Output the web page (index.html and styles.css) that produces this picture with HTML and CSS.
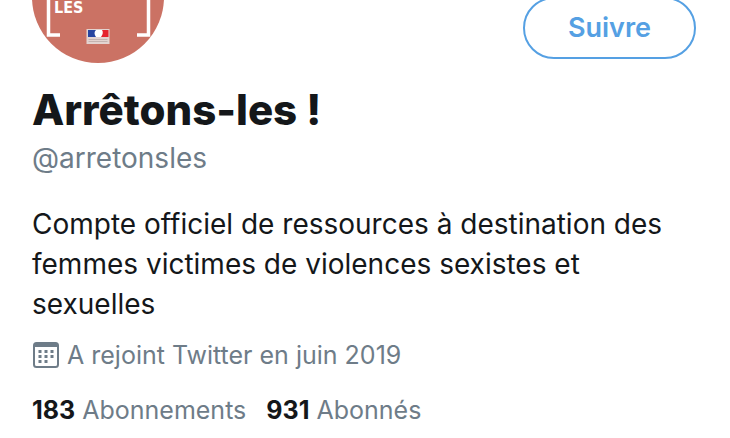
FILE: index.html
```html
<!DOCTYPE html>
<html lang="fr">
<head>
<meta charset="utf-8">
<meta name="viewport" content="width=device-width, initial-scale=1">
<title>Arrêtons-les !</title>
<link rel="stylesheet" href="styles.css">
</head>
<body>
<main class="profile">
  <header class="profile-top">
    <svg class="avatar" viewBox="0 0 132 132" aria-hidden="true">
      <circle cx="66" cy="66" r="66" fill="#cb7264"/>
      <path d="M28 40H16.500V104H28M105 40H116.500V104H105" fill="none" stroke="#fff" stroke-width="3.500"/>
      <text class="avatar-text" x="22" y="82">LES</text>
      <rect x="54.500" y="98" width="23" height="15" fill="#e3d3d0"/>
      <path d="M56 99h9q-4 3 0 7h-9z" fill="#2745a0"/>
      <path d="M64 99h7v7h-7q-3-4 0-7z" fill="#fff"/>
      <path d="M70 99h6.500v7H69q3-4 1-7z" fill="#e5232e"/>
      <path d="M56.500 108.500h19M56.500 110.500h19" stroke="#c4b3b0" stroke-width="1"/>
    </svg>
    <button class="follow" type="button">Suivre</button>
  </header>
  <h1 class="name">Arrêtons-les !</h1>
  <p class="handle">@arretonsles</p>
  <p class="bio">Compte officiel de ressources à destination des femmes victimes de violences sexistes et sexuelles</p>
  <p class="joined">
    <svg class="calendar" viewBox="0 0 26 26" aria-hidden="true">
      <rect x="1" y="1" width="24" height="24" rx="2.500" fill="none" stroke="currentColor" stroke-width="2"/>
      <path d="M1 1h24v4H1z" fill="currentColor"/>
      <path d="M5.500 8h3v3h-3zM11.500 8h3v3h-3zM17.500 8h3v3h-3zM5.500 13h3v3h-3zM11.500 13h3v3h-3zM17.500 13h3v3h-3zM5.500 18h3v3h-3zM11.500 18h3v3h-3z" fill="currentColor"/>
    </svg>
    <span>A rejoint Twitter en juin 2019</span>
  </p>
  <nav class="stats">
    <a class="stat" href="#abonnements"><strong class="count">183</strong> Abonnements</a>
    <a class="stat" href="#abonnes"><strong class="count">931</strong> Abonnés</a>
  </nav>
</main>
</body>
</html>
```
FILE: styles.css
```css
body {
  margin: 0;
  overflow: hidden;
  background: #fff;
  color: #14171a;
  font-family: Inter, "Liberation Sans", sans-serif;
}

.profile {
  padding: 0 34px 0 32px;
}

.profile-top {
  display: flex;
  align-items: flex-end;
  justify-content: space-between;
  margin-top: -69px;
}

.avatar {
  width: 132px;
  height: 132px;
}

.avatar-text {
  fill: #fff;
  font: bold 16px "DejaVu Sans Condensed", "DejaVu Sans", sans-serif;
}

.follow {
  box-sizing: border-box;
  height: 62px;
  margin: 0 0 4px;
  padding: 0 43px;
  border: 2px solid #55a0e3;
  border-radius: 31px;
  background: #fff;
  color: #55a0e3;
  font: 600 27px/32px Inter, "Liberation Sans", sans-serif;
}

.name {
  margin: 23px 0 8px;
  font-size: 42px;
  font-weight: 800;
  line-height: 48px;
}

.handle {
  margin: 0 0 30px;
  color: #6e7c88;
  font-size: 28px;
  line-height: 32px;
}

.bio {
  margin: 0;
  font-size: 28px;
  line-height: 40px;
}

.joined {
  display: flex;
  align-items: center;
  gap: 8px;
  margin: 15px 0 23px;
  color: #6e7c88;
  font-size: 25px;
  line-height: 32px;
}

.calendar {
  width: 26px;
  height: 26px;
  margin-left: 1px;
}

.stats {
  display: flex;
  gap: 20px;
  font-size: 25px;
  line-height: 32px;
}

.stat {
  color: #6e7c88;
  text-decoration: none;
}

.count {
  color: #14171a;
  font-weight: 700;
}
```
